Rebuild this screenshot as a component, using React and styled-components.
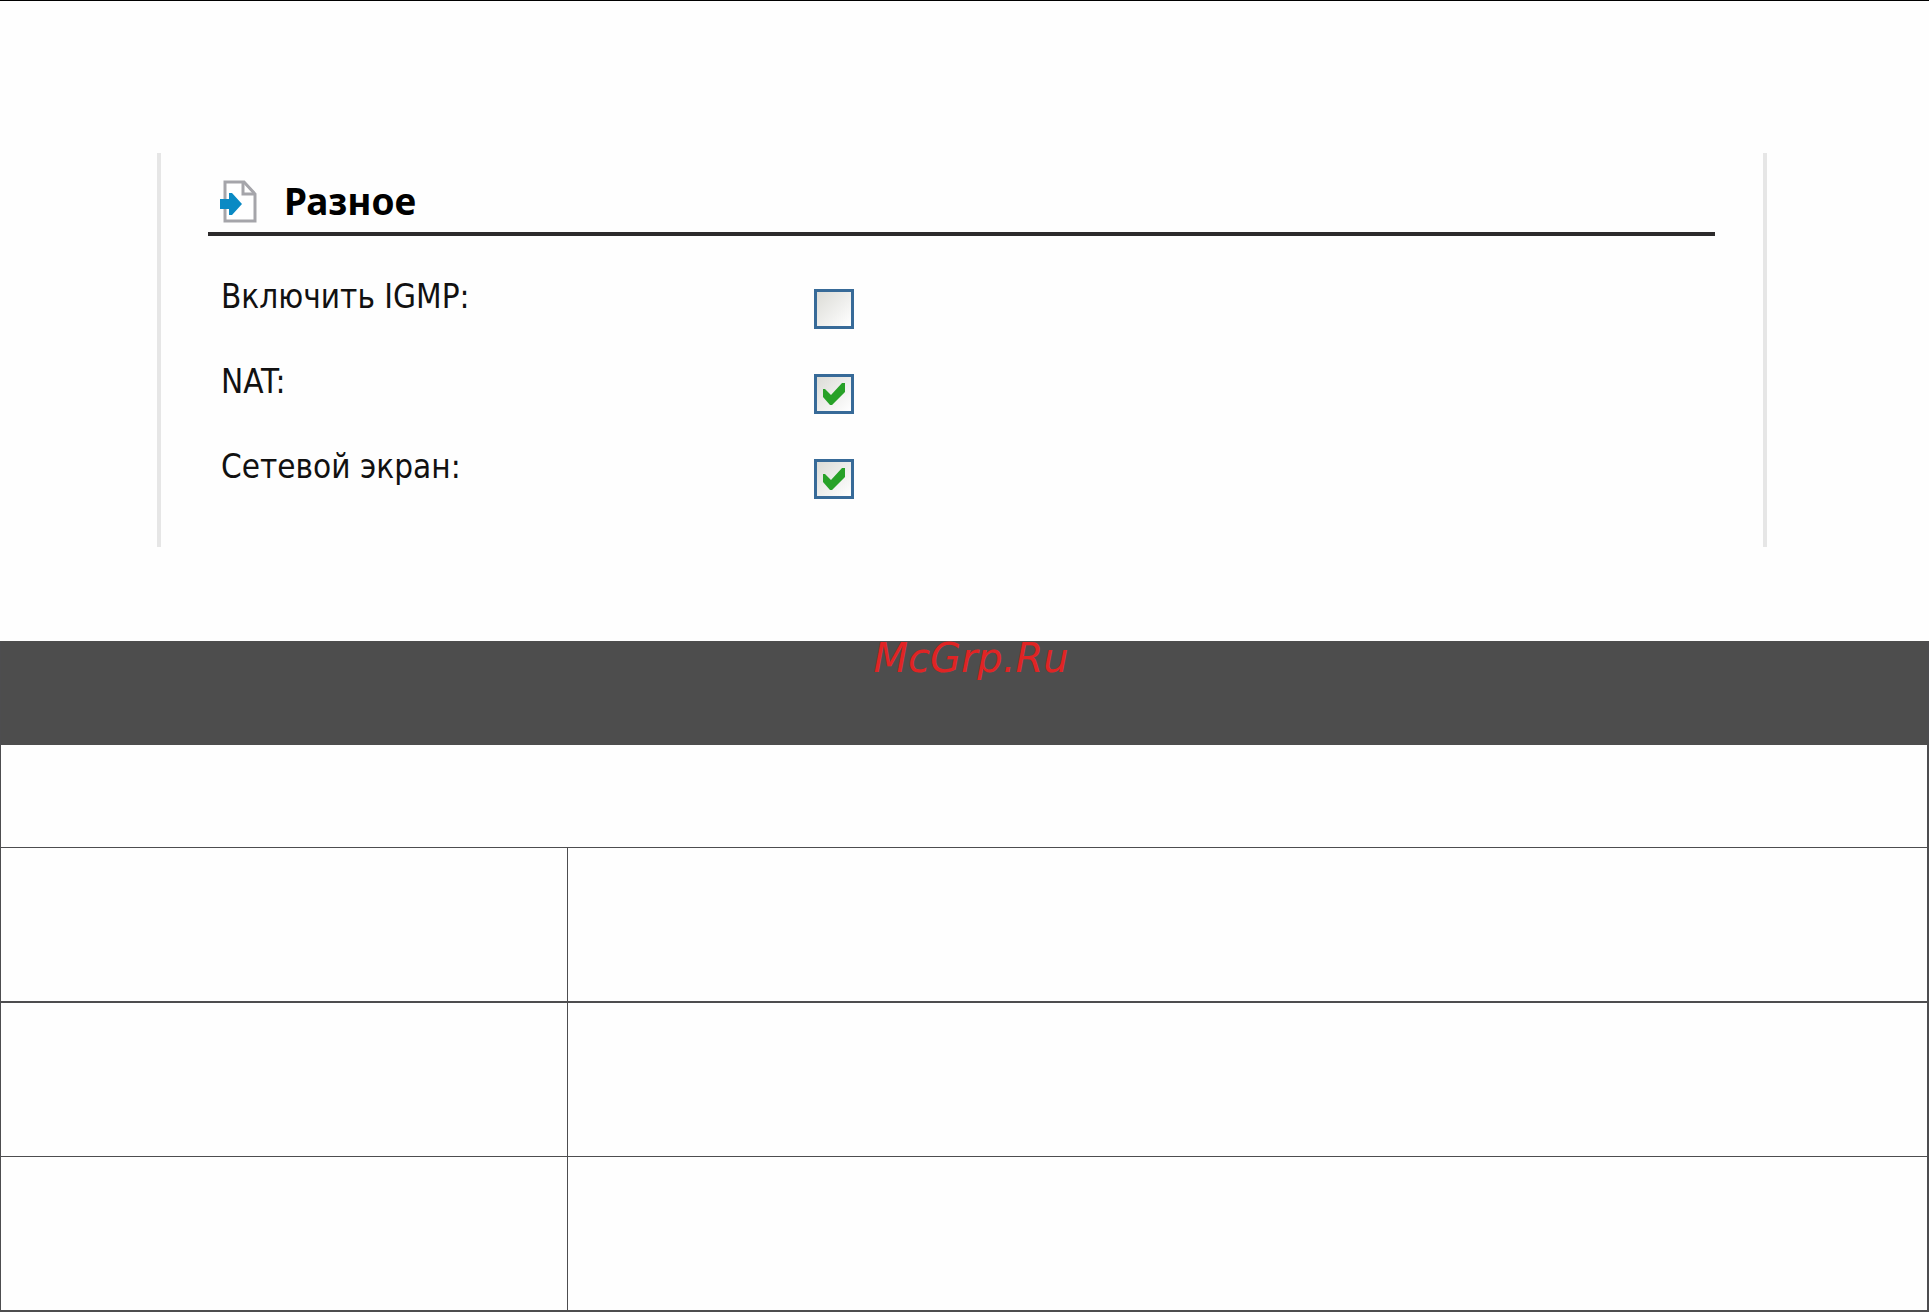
import React, { useState } from 'react';
import styled, { createGlobalStyle } from 'styled-components';

const GlobalStyle = createGlobalStyle`
  * {
    box-sizing: border-box;
  }

  body {
    margin: 0;
    background-color: #fefefe;
    font-family: "DejaVu Sans Condensed", "DejaVu Sans", sans-serif;
    color: #111;
  }
`;

const Page = styled.main`
  border-top: 1px solid #000;
  padding-top: 152px;
`;

const Panel = styled.section`
  height: 394px;
  margin: 0 162px 94px 157px;
  padding: 20px 48px 0 47px;
  border-left: 4px solid #e6e6e6;
  border-right: 4px solid #e6e6e6;
`;

const PanelHeader = styled.header`
  display: flex;
  align-items: center;
  gap: 27px;
  height: 63px;
  padding: 0 0 3px 12px;
  border-bottom: 4px solid #2c2a2b;
`;

const PanelTitle = styled.h2`
  margin: 0;
  font-family: "Noto Sans", sans-serif;
  font-size: 37px;
  line-height: 48px;
  font-weight: bold;
  color: #000;
`;

const PageIcon = styled.svg`
  width: 37px;
  height: 43px;
  flex: none;
`;

const Options = styled.div`
  display: grid;
  gap: 33px;
  padding: 41px 0 0 13px;
`;

const OptionRow = styled.div`
  display: grid;
  grid-template-columns: 593px 1fr;
  align-items: end;
  height: 52px;
`;

const OptionLabel = styled.label`
  align-self: start;
  font-size: 33px;
  line-height: 40px;
  white-space: nowrap;
`;

const CheckboxWrapper = styled.span`
  display: grid;
  width: 40px;
  height: 40px;

  > * {
    grid-area: 1 / 1;
  }
`;

const Checkbox = styled.input`
  appearance: none;
  width: 40px;
  height: 40px;
  margin: 0;
  border: 3px solid #376a98;
  background: linear-gradient(135deg, #dcdcd7, #fff);
`;

const CheckMark = styled.svg`
  width: 40px;
  height: 40px;
  pointer-events: none;
`;

const SettingsTable = styled.table`
  width: 100%;
  border-collapse: separate;
  border-spacing: 0;
  table-layout: fixed;
  border: solid #4d4d4f;
  border-width: 0 2px 1px 1px;
`;

const NameColumn = styled.col`
  width: 567px;
`;

const TableHead = styled.th`
  height: 104px;
  padding: 0;
  background-color: #4d4d4d;
  vertical-align: top;
`;

const Brand = styled.a`
  display: block;
  padding-left: 14px;
  font-family: "DejaVu Sans", sans-serif;
  font-size: 40px;
  line-height: 34px;
  font-style: italic;
  font-weight: normal;
  color: #e02424;
  text-decoration: none;
`;

const Cell = styled.td`
  height: ${({ $height }) => $height}px;
  padding: 0;
  border-bottom: ${({ $line }) => $line || 1}px solid #4d4d4f;
`;

const NameCell = styled(Cell)`
  border-right: 1px solid #4d4d4f;
`;

const options = [
  { id: 'igmp', label: 'Включить IGMP:', checked: false },
  { id: 'nat', label: 'NAT:', checked: true },
  { id: 'firewall', label: 'Сетевой экран:', checked: true },
];

const rows = [
  { height: 155, line: 2 },
  { height: 154, line: 1 },
  { height: 154, line: 1 },
];

const Option = ({ id, label, checked }) => {
  const [isChecked, setIsChecked] = useState(checked);

  return (
    <OptionRow>
      <OptionLabel htmlFor={id}>{label}</OptionLabel>
      <CheckboxWrapper>
        <Checkbox
          type="checkbox"
          id={id}
          checked={isChecked}
          onChange={(e) => setIsChecked(e.target.checked)}
        />
        {isChecked && (
          <CheckMark viewBox="0 0 40 40" aria-hidden="true">
            <path d="M9 15h2l6 6L28 9h3v9L18 31h-2l-7-8z" fill="#27a127" />
          </CheckMark>
        )}
      </CheckboxWrapper>
    </OptionRow>
  );
};

const App = () => {
  return (
    <>
      <GlobalStyle />
      <Page>
        <Panel>
          <PanelHeader>
            <PageIcon viewBox="0 0 37 43" aria-hidden="true">
              <path d="M5 2h19l11 12v27H5z" fill="#fff" stroke="#a5a5aa" strokeWidth="3" />
              <path d="M23 2v12h12" fill="none" stroke="#a5a5aa" strokeWidth="3" />
              <path d="M0 19h9v-6h3l10 11-10 11H9v-6H0z" fill="#0a8ac4" />
            </PageIcon>
            <PanelTitle>Разное</PanelTitle>
          </PanelHeader>
          <Options>
            {options.map((option) => (
              <Option key={option.id} {...option} />
            ))}
          </Options>
        </Panel>
        <SettingsTable>
          <colgroup>
            <NameColumn />
            <col />
          </colgroup>
          <thead>
            <tr>
              <TableHead colSpan={2}>
                <Brand href="#">McGrp.Ru</Brand>
              </TableHead>
            </tr>
          </thead>
          <tbody>
            <tr>
              <Cell colSpan={2} $height={103} />
            </tr>
            {rows.map((row, index) => (
              <tr key={index}>
                <NameCell $height={row.height} $line={row.line} />
                <Cell $height={row.height} $line={row.line} />
              </tr>
            ))}
          </tbody>
        </SettingsTable>
      </Page>
    </>
  );
};

export default App;
